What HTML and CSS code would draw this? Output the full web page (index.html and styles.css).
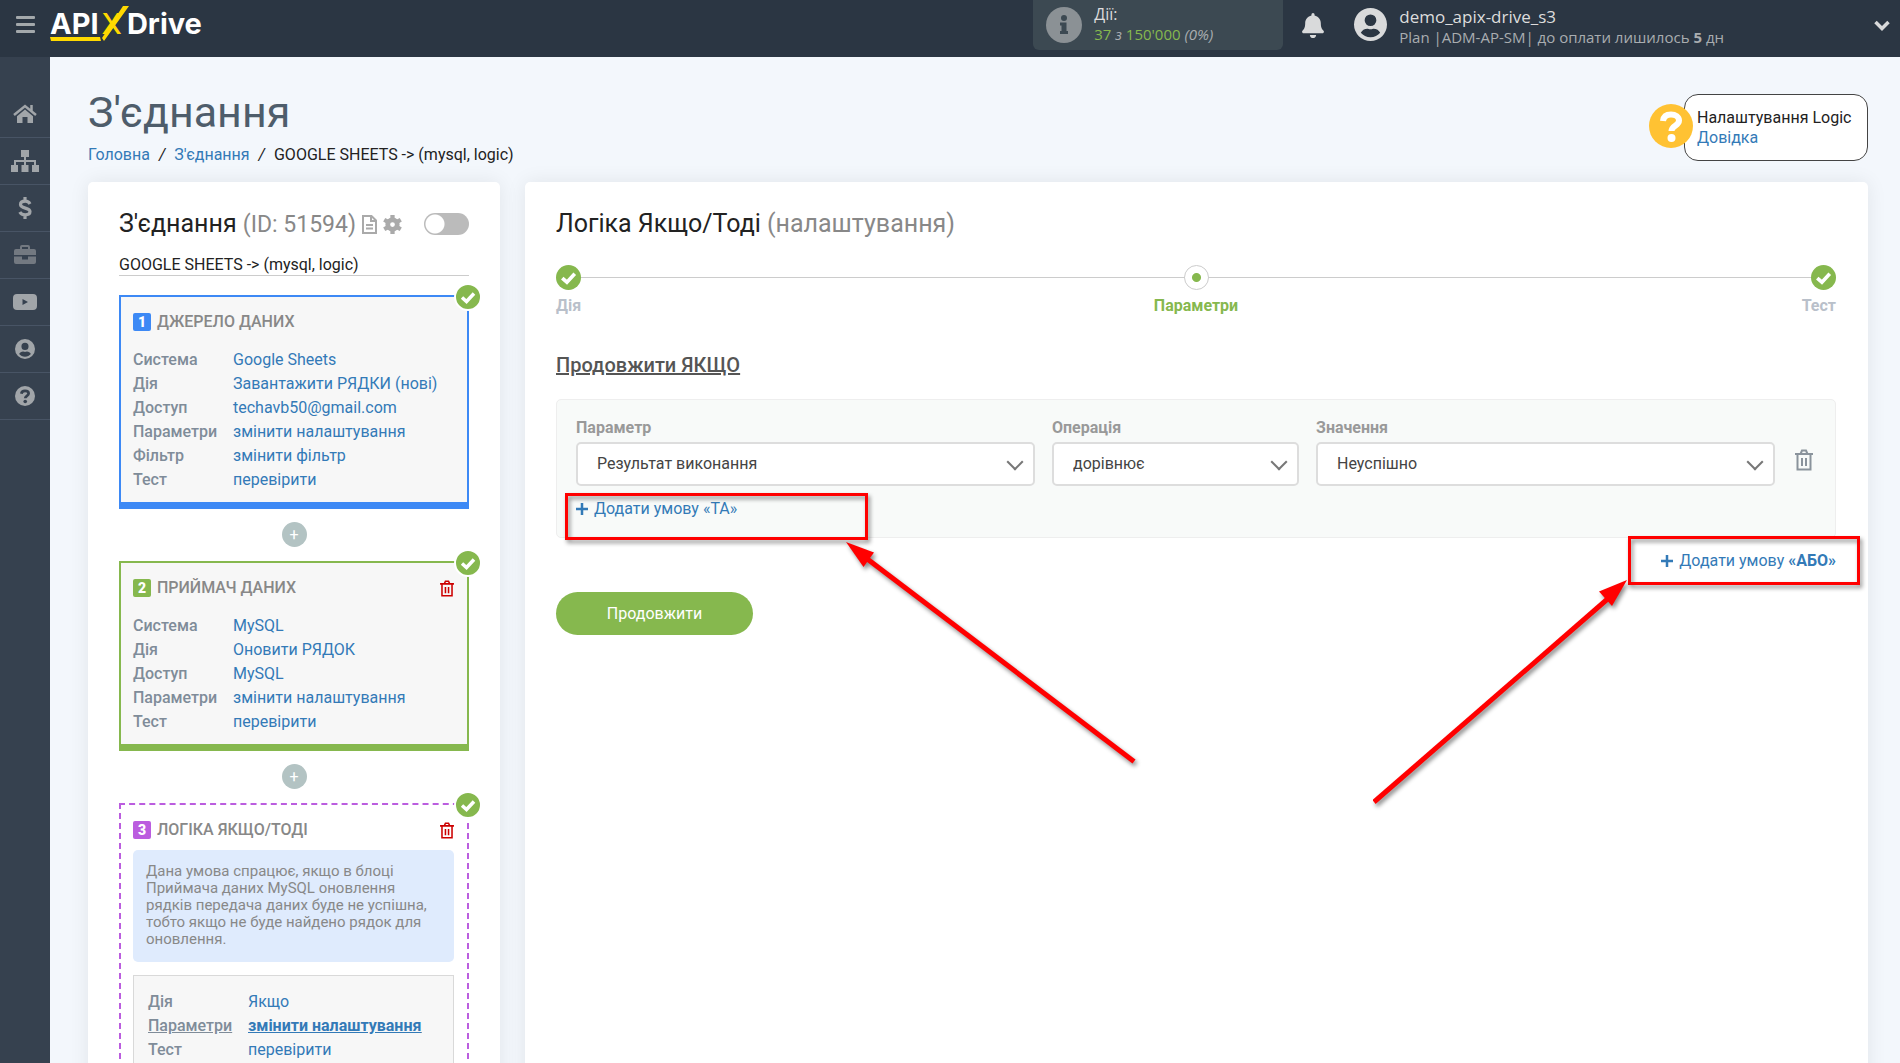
FILE: index.html
```html
<!DOCTYPE html>
<html lang="uk">
<head>
    <meta charset="UTF-8">
    <meta name="viewport" content="width=device-width, initial-scale=1.0">
    <title>З'єднання - ApiX-Drive</title>
    <link rel="stylesheet" href="styles.css">
</head>
<body>
    <!-- shared icons -->
    <svg class="sprite" aria-hidden="true">
        <symbol id="i-check" viewBox="0 0 24 24"><path d="M6 12.500l4.500 4L18 8.500" fill="none" stroke="#fff" stroke-width="3.500"/></symbol>
        <symbol id="i-trash" viewBox="0 0 18 22"><path d="M2.500 5h13v15.500h-13zM0 5h18M5.500 5l1.500-3.500h4L12.500 5M7 9v8M11 9v8" fill="none" stroke="currentColor" stroke-width="2"/></symbol>
        <symbol id="i-user" viewBox="0 0 496 496"><path fill="currentColor" fill-rule="evenodd" d="M248 0a248 248 0 1 0 0 496 248 248 0 0 0 0-496zm0 96a88 88 0 1 1 0 176 88 88 0 0 1 0-176zm0 344c-59 0-111-27-146-68 19-35 56-60 98-60 13 0 22 8 48 8s35-8 48-8c42 0 79 25 98 60-35 41-87 68-146 68z"/></symbol>
        <symbol id="i-help" viewBox="0 0 44 44"><circle cx="22" cy="22" r="22" fill="currentColor"/><path class="mark" d="M14 17c.5-4.500 3.500-6.500 8-6.500 4.500 0 8 2.500 8 6 0 5.500-7.500 5-7.500 10.500" fill="none" stroke-width="6"/><circle class="dot" cx="22.500" cy="34" r="4"/></symbol>
        <symbol id="i-plus" viewBox="0 0 12 12"><path d="M6 0v12M0 6h12" stroke="currentColor" stroke-width="2.500"/></symbol>
    </svg>

    <header class="topbar">
        <button class="menu-btn" aria-label="Меню"><span></span><span></span><span></span></button>
        <a class="logo" href="#">
            <span>API</span><span class="logo-x">X</span><span>Drive</span>
            <svg class="logo-line" viewBox="0 0 80 36"><path d="M0 31h50l1 4H1zM52 32L73 0h6L54 35z" fill="#ffd900"/></svg>
        </a>
        <div class="actions">
            <svg class="actions-icon" viewBox="0 0 36 36"><circle cx="18" cy="18" r="18" fill="#8b9195"/><path d="M18 8a3 3 0 1 1 0 6 3 3 0 0 1 0-6zM14 15.500h6.500v8.500H22v3h-8v-3h1.500v-5.500H14z" fill="#3c4952"/></svg>
            <div>
                <div class="actions-title">Дії:</div>
                <div class="actions-count"><b>37</b> з <b>150'000</b> (0%)</div>
            </div>
        </div>
        <button class="bell" aria-label="Сповіщення">
            <svg viewBox="0 0 448 512"><path fill="currentColor" d="M224 512c35 0 64-29 64-64H160c0 35 29 64 64 64zm215-150c-19-21-55-52-55-154 0-78-55-140-128-155V32a32 32 0 1 0-64 0v21C119 68 64 130 64 208c0 102-36 133-55 154-6 6-9 14-9 22 0 16 13 32 32 32h384c19 0 32-16 32-32 0-8-3-16-9-22z"/></svg>
        </button>
        <div class="account">
            <svg class="account-icon"><use href="#i-user"/></svg>
            <div>
                <div class="account-name">demo_apix-drive_s3</div>
                <div class="account-plan">Plan |ADM-AP-SM| до оплати лишилось <b>5</b> дн</div>
            </div>
        </div>
        <button class="account-toggle" aria-label="Відкрити">
            <svg viewBox="0 0 16 11"><path d="M1.500 2L8 8.500 14.500 2" fill="none" stroke="currentColor" stroke-width="3.500"/></svg>
        </button>
    </header>

    <div class="layout">
        <nav class="sidebar">
            <a href="#" aria-label="Головна"><svg viewBox="0 0 24 20"><path fill="currentColor" d="M12 5.500l8 6.700V19h-5.500v-6h-5v6H4v-6.800z"/><path d="M1 11L12 2l11 9M18.500 1v6" fill="none" stroke="currentColor" stroke-width="2.500"/></svg></a>
            <a href="#" aria-label="З'єднання"><svg class="wide" viewBox="0 0 28 22"><path fill="currentColor" d="M10 0h8v7h-8zM0 15h7v7H0zM10.500 15h7v7h-7zM21 15h7v7h-7z"/><path d="M14 6v9M4 15v-4h20v4" fill="none" stroke="currentColor" stroke-width="2"/></svg></a>
            <a href="#" aria-label="Оплата"><svg class="wide" viewBox="0 0 28 22"><path d="M19 7C18 5 16.500 4.200 14.200 4.200 11.300 4.200 9.500 5.500 9.500 7.500c0 4.500 9.500 2.700 9.500 7 0 2-1.800 3.300-4.800 3.300-2.500 0-4.400-.8-5.400-2.800M14 0v4M14 18v4" fill="none" stroke="currentColor" stroke-width="3.200"/></svg></a>
            <a href="#" class="dim" aria-label="Послуги"><svg viewBox="0 0 24 20"><path fill="currentColor" fill-rule="evenodd" d="M3 4h4V2q0-2 2-2h6q2 0 2 2v2h4q2 0 2 2v4H1V6q0-2 2-2zm6 0h6V2H9zM1 11.500h8v3h6v-3h8V17q0 2-2 2H3q-2 0-2-2z"/></svg></a>
            <a href="#" aria-label="Відео"><svg viewBox="0 0 24 18"><path fill="currentColor" fill-rule="evenodd" d="M4 1h16q4 0 4 4v8q0 4-4 4H4q-4 0-4-4V5q0-4 4-4zm5.500 5v6l5.500-3z"/></svg></a>
            <a href="#" aria-label="Профіль"><svg><use href="#i-user"/></svg></a>
            <a href="#" aria-label="Довідка"><svg class="help-icon"><use href="#i-help"/></svg></a>
        </nav>

        <main class="content">
            <div class="page-head">
                <div>
                    <h1>З'єднання</h1>
                    <div class="breadcrumb">
                        <a href="#">Головна</a><i>/</i><a href="#">З'єднання</a><i>/</i><span>GOOGLE SHEETS -&gt; (mysql, logic)</span>
                    </div>
                </div>
                <div class="help-box">
                    <svg class="help-badge"><use href="#i-help"/></svg>
                    <div>Налаштування Logic</div>
                    <a href="#">Довідка</a>
                </div>
            </div>

            <div class="columns">
                <section class="card connection">
                    <div class="connection-head">
                        <h2>З'єднання <small>(ID: 51594)</small></h2>
                        <svg class="icon-file" viewBox="0 0 15 19"><path d="M1 1h8.500L14 5.500V18H1zM9 1v5h5M4 10h7M4 13.500h7" fill="none" stroke="currentColor" stroke-width="2"/></svg>
                        <svg class="icon-gear" viewBox="0 0 20 20"><circle cx="10" cy="10" r="5" fill="none" stroke="currentColor" stroke-width="5"/><path d="M10 0v4M10 16v4M1.300 5l3.500 2M15.200 13l3.500 2M1.300 15l3.500-2M15.200 7l3.500-2" stroke="currentColor" stroke-width="4.500"/></svg>
                        <input type="checkbox" class="toggle" aria-label="Увімкнути з'єднання">
                    </div>
                    <div class="connection-name">GOOGLE SHEETS -&gt; (mysql, logic)</div>

                    <div class="block source">
                        <svg class="done"><use href="#i-check"/></svg>
                        <h3><span class="num">1</span>ДЖЕРЕЛО ДАНИХ</h3>
                        <dl>
                            <dt>Система</dt><dd><a href="#">Google Sheets</a></dd>
                            <dt>Дія</dt><dd><a href="#">Завантажити РЯДКИ (нові)</a></dd>
                            <dt>Доступ</dt><dd><a href="#">techavb50@gmail.com</a></dd>
                            <dt>Параметри</dt><dd><a href="#">змінити налаштування</a></dd>
                            <dt>Фільтр</dt><dd><a href="#">змінити фільтр</a></dd>
                            <dt>Тест</dt><dd><a href="#">перевірити</a></dd>
                        </dl>
                    </div>
                    <button class="add-block" aria-label="Додати блок">+</button>

                    <div class="block target">
                        <svg class="done"><use href="#i-check"/></svg>
                        <h3><span class="num">2</span>ПРИЙМАЧ ДАНИХ<button class="remove" aria-label="Видалити"><svg><use href="#i-trash"/></svg></button></h3>
                        <dl>
                            <dt>Система</dt><dd><a href="#">MySQL</a></dd>
                            <dt>Дія</dt><dd><a href="#">Оновити РЯДОК</a></dd>
                            <dt>Доступ</dt><dd><a href="#">MySQL</a></dd>
                            <dt>Параметри</dt><dd><a href="#">змінити налаштування</a></dd>
                            <dt>Тест</dt><dd><a href="#">перевірити</a></dd>
                        </dl>
                    </div>
                    <button class="add-block" aria-label="Додати блок">+</button>

                    <div class="block logic">
                        <svg class="done"><use href="#i-check"/></svg>
                        <h3><span class="num">3</span>ЛОГІКА ЯКЩО/ТОДІ<button class="remove" aria-label="Видалити"><svg><use href="#i-trash"/></svg></button></h3>
                        <p class="note">Дана умова спрацює, якщо в блоці Приймача даних MySQL оновлення рядків передача даних буде не успішна, тобто якщо не буде найдено рядок для оновлення.</p>
                        <dl class="inner">
                            <dt>Дія</dt><dd><a href="#">Якщо</a></dd>
                            <dt class="current">Параметри</dt><dd class="current"><a href="#">змінити налаштування</a></dd>
                            <dt>Тест</dt><dd><a href="#">перевірити</a></dd>
                        </dl>
                    </div>
                </section>

                <section class="card settings">
                    <h2>Логіка Якщо/Тоді <small>(налаштування)</small></h2>
                    <ol class="steps">
                        <li><svg class="step-dot"><use href="#i-check"/></svg>Дія</li>
                        <li class="active"><span class="step-dot"></span>Параметри</li>
                        <li><svg class="step-dot"><use href="#i-check"/></svg>Тест</li>
                    </ol>

                    <form>
                        <h4>Продовжити ЯКЩО</h4>
                        <div class="conditions">
                            <div class="condition">
                                <div class="field">
                                    <label for="param">Параметр</label>
                                    <div class="select"><select id="param"><option>Результат виконання</option></select></div>
                                </div>
                                <div class="field">
                                    <label for="operation">Операція</label>
                                    <div class="select"><select id="operation"><option>дорівнює</option></select></div>
                                </div>
                                <div class="field">
                                    <label for="value">Значення</label>
                                    <div class="select"><select id="value"><option>Неуспішно</option></select></div>
                                </div>
                                <button type="button" class="remove-condition" aria-label="Видалити умову"><svg><use href="#i-trash"/></svg></button>
                            </div>
                            <div class="marked">
                                <a href="#" class="add-link"><svg><use href="#i-plus"/></svg>Додати умову «ТА»</a>
                                <span class="frame frame-and"></span>
                                <svg class="arrow arrow-and" viewBox="0 0 300 230"><path d="M288 219.500L20 16" stroke="#f00" stroke-width="5"/><path d="M0 0l28 10.500L17.500 25z" fill="#f00"/></svg>
                            </div>
                        </div>
                        <div class="or-row">
                            <div class="marked">
                                <a href="#" class="add-link"><svg><use href="#i-plus"/></svg><span>Додати умову <b>«АБО»</b></span></a>
                                <span class="frame frame-or"></span>
                                <svg class="arrow arrow-or" viewBox="0 0 260 230"><path d="M1 222L238 16" stroke="#f00" stroke-width="5"/><path d="M254 0l-28 11.500L239 26z" fill="#f00"/></svg>
                            </div>
                        </div>
                        <button type="button" class="submit">Продовжити</button>
                    </form>
                </section>
            </div>
        </main>
    </div>
</body>
</html>
```
FILE: styles.css
```css
* {
    box-sizing: border-box;
}
body {
    margin: 0;
    min-height: 100vh;
    display: flex;
    flex-direction: column;
    font-family: Roboto, "Liberation Sans", sans-serif;
    font-size: 16px;
    line-height: 20px;
    color: #222;
    background: #f3f7fc;
}
h1, h2, h3, h4, p, dl, dd, ol {
    margin: 0;
    padding: 0;
}
a {
    color: #337ab7;
    text-decoration: none;
}
button {
    padding: 0;
    border: none;
    background: none;
    font: inherit;
    cursor: pointer;
}
svg {
    display: block;
}
.sprite {
    position: absolute;
    width: 0;
    height: 0;
}

/* top bar */
.topbar {
    flex: none;
    display: flex;
    align-items: flex-start;
    height: 57px;
    padding: 0 10px 0 16px;
    background: #2b3643;
    font-family: "Open Sans", "Noto Sans", sans-serif;
    color: #ddd;
}
.menu-btn {
    display: flex;
    flex-direction: column;
    gap: 4px;
    width: 19px;
    margin: 16px 15px 0 0;
}
.menu-btn span {
    height: 3px;
    border-radius: 1px;
    background: #a3a8ab;
}
.logo {
    position: relative;
    display: flex;
    margin: 8px auto 0 0;
    font-family: Inter, sans-serif;
    font-size: 29px;
    font-weight: 700;
    line-height: 32px;
    color: #fff;
}
.logo-x {
    margin: 0 5px 0 3px;
    font-weight: 500;
    color: #ffd900;
}
.logo-line {
    position: absolute;
    left: 0;
    top: -2px;
    width: 80px;
    height: 36px;
}
.actions {
    display: flex;
    gap: 12px;
    width: 250px;
    height: 50px;
    padding: 4px 13px;
    border-radius: 0 0 6px 6px;
    background: #3c4952;
}
.actions-icon {
    width: 36px;
    height: 36px;
    margin-top: 3px;
}
.actions-title {
    font-size: 16px;
    color: #ddd;
}
.actions-count {
    font-size: 15px;
    font-style: italic;
    color: #a9adb0;
}
.actions-count b {
    font-style: normal;
    font-weight: 400;
    color: #86b84e;
}
.bell {
    width: 22px;
    margin: 13px 30px 0 19px;
    color: #d9dadb;
}
.bell svg {
    width: 22px;
    height: 25px;
}
.account {
    display: flex;
    gap: 12px;
    padding-top: 7px;
}
.account-icon {
    width: 33px;
    height: 33px;
    margin-top: 1px;
    color: #d9dadb;
}
.account-name {
    font-size: 17px;
}
.account-plan {
    font-size: 15px;
    color: #a9adb0;
}
.account-toggle {
    margin: 20px 0 0 150px;
    color: #d9dadb;
}
.account-toggle svg {
    width: 16px;
    height: 11px;
}

/* sidebar */
.layout {
    flex: 1;
    display: flex;
}
.sidebar {
    flex: none;
    width: 50px;
    padding-top: 34px;
    background: #36414f;
}
.sidebar a {
    display: flex;
    align-items: center;
    justify-content: center;
    height: 47px;
    border-bottom: 1px solid #485465;
    color: #a1a5a9;
}
.sidebar .dim {
    color: #737981;
}
.sidebar svg {
    width: 24px;
    height: 20px;
}
.sidebar .wide {
    width: 28px;
    height: 22px;
}
.help-icon {
    --mark: #36414f;
}
.mark {
    stroke: var(--mark, #fff);
}
.dot {
    fill: var(--mark, #fff);
}

/* page */
.content {
    flex: 1;
    padding: 37px 32px 0 38px;
}
.page-head {
    display: flex;
    justify-content: space-between;
    height: 88px;
}
h1 {
    font-size: 43px;
    font-weight: 400;
    line-height: 36px;
    color: #4e5d6b;
}
.breadcrumb {
    margin-top: 15px;
}
.breadcrumb i {
    margin: 0 9px;
}
.help-box {
    position: relative;
    width: 184px;
    height: 67px;
    padding: 13px 12px;
    border: 1px solid #444;
    border-radius: 14px;
    background: #fff;
}
.help-badge {
    position: absolute;
    left: -36px;
    top: 9px;
    width: 44px;
    height: 44px;
    color: #ffc233;
}
.columns {
    display: flex;
    gap: 25px;
}
.card {
    padding: 30px 31px;
    border-radius: 5px;
    background: #fff;
    box-shadow: 0 0 20px rgba(0, 0, 0, 0.08);
}
h2 {
    font-size: 25px;
    font-weight: 400;
    line-height: 24px;
}
h2 small {
    font-size: 25px;
    color: #888;
}

/* left card */
.connection {
    flex: none;
    width: 412px;
}
.connection-head {
    display: flex;
    align-items: center;
    gap: 6px;
    height: 24px;
    color: #aaa;
}
.connection-head h2 {
    color: #222;
}
.connection-head small {
    font-size: 23px;
}
.icon-file {
    width: 15px;
    height: 19px;
}
.icon-gear {
    width: 19px;
    height: 19px;
}
.toggle {
    appearance: none;
    width: 45px;
    height: 22px;
    margin: 0 0 0 auto;
    border-radius: 11px;
    background: radial-gradient(circle at 11px 11px, #fff 9px, #bbb 10px);
}
.connection-name {
    height: 23px;
    margin: 17px 0 19px;
    padding-top: 2px;
    border-bottom: 1px solid #ccc;
}
.block {
    position: relative;
    padding: 16px 13px 10px 12px;
    border: 2px solid;
    border-bottom-width: 7px;
    background: #f7f7f7;
}
.source {
    border-color: #3d89f5;
}
.target {
    border-color: #86b84e;
}
.logic {
    border: 2px dashed #bb5ddf;
    background: #fff;
}
.done {
    position: absolute;
    right: -15px;
    top: -14px;
    width: 28px;
    height: 28px;
    border: 2px solid #fff;
    border-radius: 50%;
    background: #86b84e;
}
.block h3 {
    display: flex;
    align-items: center;
    height: 18px;
    font-size: 16px;
    font-weight: 500;
    color: #888;
}
.num {
    width: 18px;
    height: 18px;
    margin-right: 6px;
    border-radius: 2px;
    font-size: 14px;
    font-weight: 900;
    line-height: 18px;
    text-align: center;
    color: #fff;
}
.source .num {
    background: #3d89f5;
}
.target .num {
    background: #86b84e;
}
.logic .num {
    background: #bb5ddf;
}
.remove {
    margin-left: auto;
    color: #c00;
}
.remove svg {
    width: 14px;
    height: 17px;
}
.block dl {
    display: grid;
    grid-template-columns: 100px 1fr;
    margin-top: 17px;
    line-height: 24px;
}
dt {
    font-weight: 500;
    color: #7f8c99;
}
.add-block {
    display: block;
    width: 25px;
    height: 25px;
    margin: 13px auto 14px;
    border-radius: 50%;
    background: #b3c3c3;
    line-height: 25px;
    color: #fff;
}
.note {
    margin: 11px 0 13px;
    padding: 13px 13px 14px;
    border-radius: 5px;
    background: #dfebfd;
    font-size: 15px;
    line-height: 17px;
    color: #888;
}
.block .inner {
    margin: 0;
    padding: 14px;
    border: 1px solid #d9d9d9;
    background: #f7f7f7;
}
.current {
    text-decoration: underline;
}
.current a {
    font-weight: 700;
    text-decoration: underline;
}

/* right card */
.settings {
    flex: 1;
    padding-right: 32px;
}
.steps {
    display: flex;
    justify-content: space-between;
    margin: 29px 0 37px;
    list-style: none;
    font-weight: 700;
    color: #b9c0ca;
    background: linear-gradient(#ccc, #ccc) 0 12px / 100% 1px no-repeat;
}
.steps li {
    flex: 1;
    display: flex;
    flex-direction: column;
    gap: 6px;
}
.steps .active {
    align-items: center;
    color: #86b84e;
}
.steps li:last-child {
    align-items: flex-end;
}
.step-dot {
    width: 25px;
    height: 25px;
    border-radius: 50%;
    background: #86b84e;
}
.active .step-dot {
    border: 1px solid #ccc;
    background: radial-gradient(circle, #86b84e 4px, #fff 5px);
}
h4 {
    font-size: 20px;
    font-weight: 500;
    line-height: 24px;
    color: #555;
    text-decoration: underline;
    text-decoration-thickness: 2px;
}
.conditions {
    height: 139px;
    margin-top: 22px;
    padding: 18px 19px;
    border: 1px solid #eee;
    border-radius: 5px;
    background: #f8faf9;
}
.condition {
    display: grid;
    grid-template-columns: 459fr 247fr 459fr 24px;
    column-gap: 17px;
}
.field label {
    display: block;
    margin-bottom: 4px;
    font-weight: 700;
    color: #999;
}
.select {
    position: relative;
}
.select::after {
    content: "";
    position: absolute;
    right: 14px;
    top: 14px;
    width: 10px;
    height: 10px;
    border: solid #777;
    border-width: 0 2px 2px 0;
    transform: rotate(45deg);
    pointer-events: none;
}
select {
    appearance: none;
    width: 100%;
    height: 44px;
    padding: 0 19px;
    border: 2px solid #ddd;
    border-radius: 5px;
    background: #fff;
    font: inherit;
    color: #444;
}
.remove-condition {
    align-self: start;
    margin: 31px 0 0 3px;
    color: #8a939c;
}
.remove-condition svg {
    width: 18px;
    height: 22px;
}
.marked {
    position: relative;
    width: max-content;
}
.conditions .marked {
    margin-top: 13px;
}
.add-link {
    display: flex;
    align-items: center;
}
.add-link b {
    font-weight: 700;
}
.add-link svg {
    width: 12px;
    height: 12px;
    margin-right: 6px;
}
.or-row {
    display: flex;
    justify-content: flex-end;
    padding-top: 13px;
}
.submit {
    width: 197px;
    height: 43px;
    margin-top: 21px;
    border-radius: 22px;
    background: #86b84e;
    color: #fff;
}

/* red callouts over the form */
.frame, .arrow {
    position: absolute;
    pointer-events: none;
    filter: drop-shadow(2px 3px 2px rgba(0, 0, 0, 0.45));
}
.frame {
    border: 3px solid #f00;
}
.frame-and {
    left: -11px;
    top: -6px;
    width: 303px;
    height: 47px;
}
.frame-or {
    right: -24px;
    top: -15px;
    width: 232px;
    height: 49px;
}
.arrow-and {
    left: 270px;
    top: 43px;
    width: 300px;
    height: 230px;
}
.arrow-or {
    right: 203px;
    top: 29px;
    width: 260px;
    height: 230px;
}
```
